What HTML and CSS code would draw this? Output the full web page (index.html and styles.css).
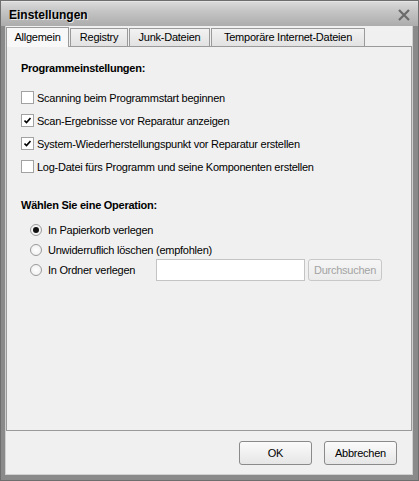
FILE: index.html
```html
<!DOCTYPE html>
<html lang="de">
<head>
<meta charset="utf-8">
<link rel="stylesheet" href="styles.css">
</head>
<body>
<div class="window">
  <div class="titlebar">
    <span class="title">Einstellungen</span>
    <svg class="close" width="12" height="12" viewBox="0 0 12 12"><path d="M1 1L11 11M11 1L1 11" stroke="#6a6a6a" stroke-width="2.2" fill="none"/></svg>
  </div>
  <div class="frame">
    <div class="tabs">
      <div class="tab active t1">Allgemein</div>
      <div class="tab t2">Registry</div>
      <div class="tab t3">Junk-Dateien</div>
      <div class="tab t4">Temporäre Internet-Dateien</div>
    </div>
    <div class="panel">
      <div class="heading">Programmeinstellungen:</div>
      <div class="checks">
        <div class="row"><span class="cb"></span>Scanning beim Programmstart beginnen</div>
        <div class="row"><span class="cb"><svg width="7" height="7" viewBox="0 0 7 7"><path d="M0.5 3.5L2.5 5.5L6.5 1" stroke="#000" stroke-width="1.6" fill="none"/></svg></span>Scan-Ergebnisse vor Reparatur anzeigen</div>
        <div class="row"><span class="cb"><svg width="7" height="7" viewBox="0 0 7 7"><path d="M0.5 3.5L2.5 5.5L6.5 1" stroke="#000" stroke-width="1.6" fill="none"/></svg></span>System-Wiederherstellungspunkt vor Reparatur erstellen</div>
        <div class="row"><span class="cb"></span>Log-Datei fürs Programm und seine Komponenten erstellen</div>
      </div>
      <div class="heading h2">Wählen Sie eine Operation:</div>
      <div class="radios">
        <div class="rrow"><span class="rb on"></span>In Papierkorb verlegen</div>
        <div class="rrow"><span class="rb"></span>Unwiderruflich löschen (empfohlen)</div>
        <div class="rrow"><span class="rb"></span><span class="rlabel">In Ordner verlegen</span><span class="input"></span><span class="btn disabled">Durchsuchen</span></div>
      </div>
    </div>
    <div class="footer">
      <span class="btn big">OK</span>
      <span class="btn big">Abbrechen</span>
    </div>
  </div>
</div>
</body>
</html>
```
FILE: styles.css
```css
html, body { margin: 0; padding: 0; background: #f0f0f0; }
body { font-family: "Liberation Sans", Arial, sans-serif; font-size: 11px; letter-spacing: -0.25px; color: #000; }
.window {
  width: 419px; height: 481px; box-sizing: border-box;
  display: flex; flex-direction: column;
  border: 1px solid #6e6e6e;
  background: #f0f0f0;
}
.titlebar {
  height: 24px; flex: none;
  display: flex; align-items: center; justify-content: space-between;
  padding: 0 8px 0 8px;
  background: linear-gradient(#dadada, #c4c4c4 40%, #acacac);
  border-top: 1px solid #e6e6e6;
}
.title { font-weight: bold; font-size: 12px; letter-spacing: 0; color: #000; text-shadow: 1px 1px 0 #e8e8e8; padding-top: 2px; }
.close { margin-top: 1px; }
.frame {
  flex: 1; display: flex; flex-direction: column;
  border-left: 4px solid #8a8a8a; border-right: 5px solid #8a8a8a; border-bottom: 5px solid #8a8a8a;
  box-shadow: inset 1px 0 #d0d0d0, inset -1px 0 #d0d0d0, inset 0 -1px #d0d0d0;
  padding: 1px 0 0 1px;
}
.tabs { display: flex; height: 19px; align-items: flex-end; }
.tab {
  height: 18px; box-sizing: border-box; line-height: 17px;
  border: 1px solid #9a9a9a; border-bottom: none;
  background: linear-gradient(#f2f2f2, #e2e2e2);
  text-align: center; margin-right: 1px; color: #000;
}
.tab.active { height: 20px; background: #f8f8f8; margin-bottom: -1px; position: relative; line-height: 18px; }
.t1 { width: 63px; }
.t2 { width: 58px; }
.t3 { width: 81px; }
.t4 { width: 154px; }
.panel {
  height: 385px; box-sizing: border-box; margin-right: 1px;
  border: 1px solid #9a9a9a;
  background: #f0f0f0;
  padding: 13px 0 0 14px;
}
.heading { font-weight: bold; height: 16px; line-height: 16px; }
.checks { margin-top: 10px; }
.row { height: 23px; display: flex; align-items: center; }
.cb {
  width: 13px; height: 13px; box-sizing: border-box; flex: none;
  border: 1px solid #a2a2a2; background: #fff; margin-right: 3px;
  display: flex; align-items: center; justify-content: center;
}
.h2 { margin-top: 19px; }
.radios { margin-top: 7px; padding-left: 9px; }
.rrow { height: 20px; display: flex; align-items: center; }
.rb {
  width: 12px; height: 12px; box-sizing: border-box; flex: none; border-radius: 50%;
  border: 1px solid #9a9a9a; background: radial-gradient(#ffffff, #ececec);
  margin-right: 6px; display: flex; align-items: center; justify-content: center;
}
.rb.on::after { content: ""; width: 6px; height: 6px; border-radius: 50%; background: #111; }
.rlabel { width: 108px; }
.input { width: 149px; height: 22px; box-sizing: border-box; border: 1px solid #c4c4c4; background: #fff; margin-right: 3px; }
.btn {
  box-sizing: border-box; display: inline-flex; align-items: center; justify-content: center;
  border: 1px solid #8a8a8a; border-radius: 3px;
  background: linear-gradient(#fbfbfb, #e6e6e6);
}
.btn.disabled { width: 74px; height: 22px; color: #a3a3a3; border-color: #c8c8c8; background: linear-gradient(#f6f6f6, #ececec); }
.footer { flex: 1; display: flex; justify-content: flex-end; align-items: flex-start; padding: 10px 16px 0 0; gap: 12px; }
.btn.big { width: 73px; height: 24px; }
```
